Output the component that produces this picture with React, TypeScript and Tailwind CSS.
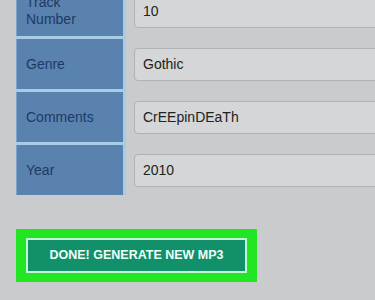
import React from "react";

const rows = [
  { label: ["Track", "Number"], value: "10" },
  { label: ["Genre"], value: "Gothic" },
  { label: ["Comments"], value: "CrEEpinDEaTh" },
  { label: ["Year"], value: "2010" },
];

export default function App() {
  return (
    <div
      className="w-[375px] h-[300px] overflow-hidden bg-[#c9cbcd] relative"
      style={{ fontFamily: '"Liberation Sans", Arial, sans-serif' }}
    >
      <div className="flex flex-col gap-[3px] mt-[-14px] pl-[16px] bg-[linear-gradient(to_right,transparent_16px,#a9cbe6_16px,#a9cbe6_126px,transparent_126px)]">
        {rows.map((r, i) => (
          <div key={i} className="flex items-center h-[50px]">
            <div className="w-[107px] shrink-0 h-full bg-[#5a82ae] flex flex-col justify-center pl-[9px] text-[14px] leading-[17px] text-[#1d3a66] border-l border-[#7fa3c8]">
              {r.label.map((l) => (
                <span key={l}>{l}</span>
              ))}
            </div>
            <div className="ml-[11px] w-[280px] h-[33px] shrink-0 rounded-[4px] border border-[#aeb2b5] bg-[#d4d6d7] flex items-center pl-[8px] text-[14px] text-[#222]">
              {r.value}
            </div>
          </div>
        ))}
      </div>
      <div className="ml-[16px] mt-[34px] w-[241px] h-[53px] bg-[#22e524] flex items-center justify-center">
        <div className="w-[221px] h-[35px] bg-[#12906a] border-2 border-[#c5f3d6] flex items-center justify-center text-[12.5px] font-bold text-[#effff8]">
          DONE! GENERATE NEW MP3
        </div>
      </div>
    </div>
  );
}
